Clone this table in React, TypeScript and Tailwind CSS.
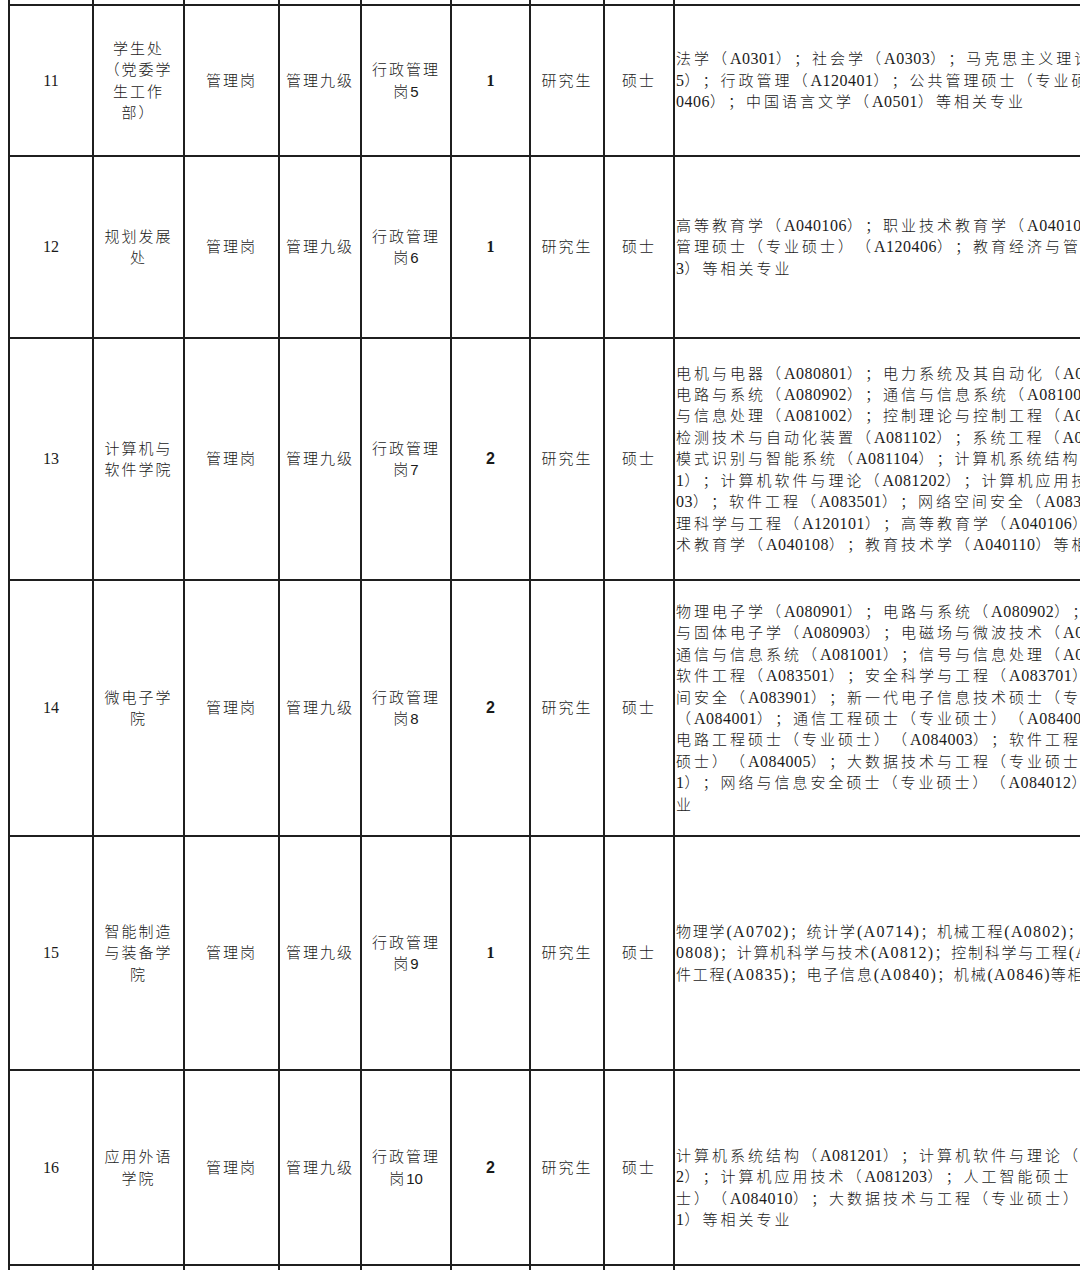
import React from 'react';

type Row = {
  no: string;
  dept: string[];
  post: string[];
  count: string;
  major: string[];
  padTop?: boolean;
  tight?: boolean;
};

const rows: Row[] = [
  {
    no: '11',
    dept: ['学生处', '（党委学', '生工作', '部）'],
    post: ['行政管理', '岗5'],
    count: '1',
    major: [
      '法学（A0301）；社会学（A0303）；马克思主义理论（A0305）',
      '5）；行政管理（A120401）；公共管理硕士（专业硕士）（A12',
      '0406）；中国语言文学（A0501）等相关专业',
    ],
  },
  {
    no: '12',
    dept: ['规划发展', '处'],
    post: ['行政管理', '岗6'],
    count: '1',
    major: [
      '高等教育学（A040106）；职业技术教育学（A040108）；',
      '管理硕士（专业硕士）（A120406）；教育经济与管理（A12040',
      '3）等相关专业',
    ],
  },
  {
    no: '13',
    dept: ['计算机与', '软件学院'],
    post: ['行政管理', '岗7'],
    count: '2',
    major: [
      '电机与电器（A080801）；电力系统及其自动化（A080802）；',
      '电路与系统（A080902）；通信与信息系统（A081001）；信号',
      '与信息处理（A081002）；控制理论与控制工程（A081101）；',
      '检测技术与自动化装置（A081102）；系统工程（A081103）；',
      '模式识别与智能系统（A081104）；计算机系统结构（A08120',
      '1）；计算机软件与理论（A081202）；计算机应用技术（A0812',
      '03）；软件工程（A083501）；网络空间安全（A083901）；管',
      '理科学与工程（A120101）；高等教育学（A040106）；职业技',
      '术教育学（A040108）；教育技术学（A040110）等相关专业',
    ],
  },
  {
    no: '14',
    dept: ['微电子学', '院'],
    post: ['行政管理', '岗8'],
    count: '2',
    major: [
      '物理电子学（A080901）；电路与系统（A080902）；微电子学',
      '与固体电子学（A080903）；电磁场与微波技术（A080904）；',
      '通信与信息系统（A081001）；信号与信息处理（A081002）；',
      '软件工程（A083501）；安全科学与工程（A083701）；网络空',
      '间安全（A083901）；新一代电子信息技术硕士（专业硕士）',
      '（A084001）；通信工程硕士（专业硕士）（A084002）；集成',
      '电路工程硕士（专业硕士）（A084003）；软件工程硕士（专业',
      '硕士）（A084005）；大数据技术与工程（专业硕士）（A08401',
      '1）；网络与信息安全硕士（专业硕士）（A084012）等相关专',
      '业',
    ],
  },
  {
    no: '15',
    dept: ['智能制造', '与装备学', '院'],
    post: ['行政管理', '岗9'],
    count: '1',
    tight: true,
    major: [
      '物理学(A0702)；统计学(A0714)；机械工程(A0802)；电气工程(A',
      '0808)；计算机科学与技术(A0812)；控制科学与工程(A0811)；软',
      '件工程(A0835)；电子信息(A0840)；机械(A0846)等相关专业',
    ],
  },
  {
    no: '16',
    dept: ['应用外语', '学院'],
    post: ['行政管理', '岗10'],
    count: '2',
    padTop: true,
    major: [
      '计算机系统结构（A081201）；计算机软件与理论（A08120',
      '2）；计算机应用技术（A081203）；人工智能硕士（专业硕',
      '士）（A084010）；大数据技术与工程（专业硕士）（A08401',
      '1）等相关专业',
    ],
  },
];

const SPLIT = /([\u3000-\u303f\u4e00-\u9fff\uff00-\uffef]+)/;
const IS_CJK = /^[\u3000-\u303f\u4e00-\u9fff\uff00-\uffef]/;

function Rich({ text, cjk, lat }: { text: string; cjk: string; lat: string }) {
  return (
    <>
      {text
        .split(SPLIT)
        .filter(Boolean)
        .map((part, i) =>
          IS_CJK.test(part) ? (
            <span key={i} className={cjk}>
              {part}
            </span>
          ) : (
            <span key={i} className={lat}>
              {part}
            </span>
          ),
        )}
    </>
  );
}

const cell = 'bg-white flex items-center justify-center text-center text-[#1a1a1a]';
const cjkSmall = "font-['Noto_Sans_CJK_SC'] font-light text-[15px] tracking-[2px]";

function Lines({ lines, lat }: { lines: string[]; lat: string }) {
  return (
    <div className="leading-[20.5px]">
      {lines.map((l, i) => (
        <div key={i}>
          <Rich text={l} cjk={cjkSmall} lat={lat} />
        </div>
      ))}
    </div>
  );
}

function EmptyRow() {
  return (
    <>
      {Array.from({ length: 9 }).map((_, i) => (
        <div key={i} className="bg-white" />
      ))}
    </>
  );
}

function DataRow({ row }: { row: Row }) {
  return (
    <>
      <div className={cell}>
        <span className="text-[16px]">{row.no}</span>
      </div>
      <div className={cell}>
        <Lines lines={row.dept} lat="text-[15px]" />
      </div>
      <div className={cell}>
        <Lines lines={['管理岗']} lat="text-[15px]" />
      </div>
      <div className={cell}>
        <Lines lines={['管理九级']} lat="text-[15px]" />
      </div>
      <div className={cell}>
        <Lines lines={row.post} lat="font-['Liberation_Sans'] text-[15px]" />
      </div>
      <div className={cell}>
        {row.count === '2' ? (
          <span className="font-['Liberation_Sans'] text-[16px] font-bold">{row.count}</span>
        ) : (
          <span className="font-['Liberation_Serif'] text-[16px] font-bold">{row.count}</span>
        )}
      </div>
      <div className={cell}>
        <Lines lines={['研究生']} lat="text-[15px]" />
      </div>
      <div className={cell}>
        <Lines lines={['硕士']} lat="text-[15px]" />
      </div>
      <div
        className={`bg-white flex items-center justify-start pl-[1px] whitespace-nowrap overflow-hidden text-[#1a1a1a] ${
          row.padTop ? 'pt-[40px]' : ''
        }`}
      >
        <div className="leading-[20.4px]">
          {row.major.map((l, i) => (
            <div key={i}>
              {row.tight ? (
                <Rich
                  text={l}
                  cjk="font-['Noto_Sans_CJK_SC'] font-light text-[15px] tracking-[1.8px]"
                  lat="text-[16px] tracking-[1.3px]"
                />
              ) : (
                <Rich
                  text={l}
                  cjk="font-['Noto_Sans_CJK_SC'] font-light text-[15px] tracking-[3px]"
                  lat="text-[16px] tracking-[0.5px]"
                />
              )}
            </div>
          ))}
        </div>
      </div>
    </>
  );
}

export default function App() {
  return (
    <div className="w-[1080px] h-[1270px] overflow-hidden bg-white [text-spacing-trim:space-all] font-['Liberation_Serif','Noto_Sans_CJK_SC',serif]">
      <div className="ml-[8px] w-max grid grid-cols-[82px_89px_93px_80px_88px_77px_72px_68px_600px] grid-rows-[4px_149px_180px_240px_254px_232px_193px_20px] gap-[2px] pl-[2px] bg-[#1f1f1f]">
        <EmptyRow />
        {rows.map((r) => (
          <DataRow key={r.no} row={r} />
        ))}
        <EmptyRow />
      </div>
    </div>
  );
}
